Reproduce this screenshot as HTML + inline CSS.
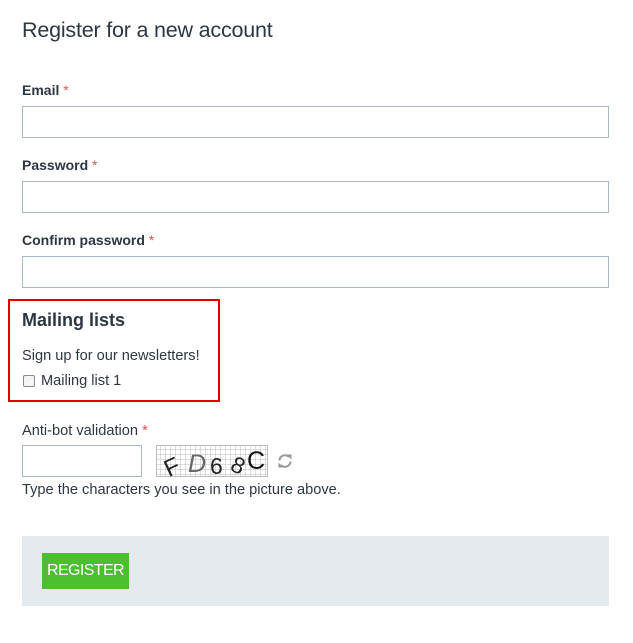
<!DOCTYPE html>
<html><head><meta charset="utf-8"><style>
*{box-sizing:border-box;margin:0;padding:0}
body{width:633px;height:643px;background:#fff;font-family:"Liberation Sans",sans-serif;color:#2d3743;position:relative;overflow:hidden}
.a{position:absolute}
h1{position:absolute;left:22px;top:18px;font-size:21.5px;font-weight:normal;color:#2d3743;letter-spacing:-0.2px}
.lbl{position:absolute;left:22px;font-size:14px;font-weight:bold}
.req{color:#e0534f;font-weight:normal}
.inp{position:absolute;left:22px;width:587px;height:32px;border:1px solid #a9b8c8;background:#fff}
.t{position:absolute;font-size:14.6px}
</style></head><body>
<h1>Register for a new account</h1>
<div class="lbl" style="top:82px">Email <span class="req">*</span></div>
<div class="inp" style="top:106px"></div>
<div class="lbl" style="top:157px">Password <span class="req">*</span></div>
<div class="inp" style="top:181px"></div>
<div class="lbl" style="top:232px">Confirm password <span class="req">*</span></div>
<div class="inp" style="top:256px"></div>
<div class="a" style="left:8px;top:299px;width:212px;height:103px;border:2px solid #e00000"></div>
<div class="a" style="left:22px;top:310px;font-size:18px;font-weight:bold">Mailing lists</div>
<div class="t" style="left:22px;top:348px">Sign up for our newsletters!</div>
<div class="a" style="left:23px;top:375px;width:12px;height:12px;border:1px solid #8a8a8a;border-radius:2px;background:#f4f4f4"></div>
<div class="t" style="left:41px;top:373px">Mailing list 1</div>
<div class="t" style="left:22px;top:423px">Anti-bot validation <span class="req">*</span></div>
<div class="a" style="left:22px;top:445px;width:120px;height:32px;border:1px solid #a9b8c8"></div>
<svg class="a" style="left:156px;top:445px" width="112" height="32">
<defs><pattern id="g" width="5" height="5" patternUnits="userSpaceOnUse"><path d="M5 0V5H0" fill="none" stroke="#bbb" stroke-width="1"/></pattern></defs>
<rect width="112" height="32" fill="#fff"/><rect width="112" height="32" fill="url(#g)"/>
<rect x="0.5" y="0.5" width="111" height="31" fill="none" stroke="#bbb"/>
<text x="8" y="29" font-family="Liberation Sans" font-size="24" fill="#222" transform="rotate(-25 18 20)">F</text>
<text x="32" y="27" font-family="Liberation Sans" font-size="25" fill="#666" font-style="italic">D</text>
<text x="54" y="29" font-family="Liberation Sans" font-size="23" fill="#222">6</text>
<text x="76" y="29" font-family="Liberation Sans" font-size="23" fill="#222" transform="rotate(25 84 20)">8</text>
<text x="91" y="24" font-family="Liberation Sans" font-size="25" fill="#111">C</text>
</svg>
<svg class="a" style="left:277px;top:453px" width="16" height="16" viewBox="0 0 16 16"><path d="M2.5 7.5a5.5 5.5 0 0 1 9.5-3.5M13.5 8.5a5.5 5.5 0 0 1-9.5 3.5" fill="none" stroke="#999" stroke-width="2"/><path d="M9.5 1.5h5v5z M6.5 14.5h-5v-5z" fill="#999"/></svg>
<div class="t" style="left:22px;top:482px">Type the characters you see in the picture above.</div>
<div class="a" style="left:22px;top:536px;width:587px;height:70px;background:#e5eaee"></div>
<div class="a" style="left:42px;top:553px;width:87px;height:36px;background:#4cbf31;color:#fff;font-size:16px;line-height:36px;text-align:center;letter-spacing:-0.6px">REGISTER</div>
</body></html>
